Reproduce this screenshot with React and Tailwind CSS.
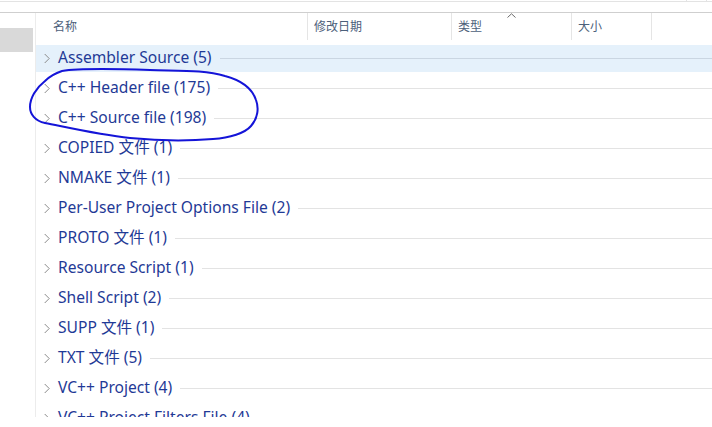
import React from "react";

const rows = [
  "Assembler Source (5)",
  "C++ Header file (175)",
  "C++ Source file (198)",
  "COPIED 文件 (1)",
  "NMAKE 文件 (1)",
  "Per-User Project Options File (2)",
  "PROTO 文件 (1)",
  "Resource Script (1)",
  "Shell Script (2)",
  "SUPP 文件 (1)",
  "TXT 文件 (5)",
  "VC++ Project (4)",
  "VC++ Project Filters File (4)",
];

function Chevron() {
  return (
    <svg width="6" height="11" viewBox="0 0 6 11" className="shrink-0">
      <path d="M0.7 1 L5.2 5.5 L0.7 10" fill="none" stroke="#8a8a8a" strokeWidth="1" />
    </svg>
  );
}

export default function App() {
  const font = { fontFamily: '"Noto Sans", "Noto Sans CJK SC", sans-serif' };
  return (
    <div className="relative w-[712px] h-[427px] bg-white overflow-hidden" style={font}>
      {/* top strip */}
      <div className="h-[2px] shrink-0 border-b border-[#e3e3e3] flex">
        <div className="w-[687px] border-r border-[#e3e3e3]" />
        <div className="w-[20px] border-r border-[#e3e3e3]" />
      </div>
      <div className="h-[10px]" />
      <div className="h-px bg-[#cfcfcf]" />
      <div className="flex h-[404px] overflow-hidden">
        {/* left nav */}
        <div className="w-[36px] shrink-0 border-r border-[#ececec] pt-[15px]">
          <div className="w-[33px] h-[24px] bg-[#d9d9d9]" />
        </div>
        {/* content */}
        <div className="flex-1 flex flex-col overflow-hidden">
          {/* header */}
          <div className="h-[27px] shrink-0 flex text-[12px] text-[#4c607a] relative">
            <div className="w-[272px] h-full border-r border-[#e5e5e5] pl-[17px] flex items-center">名称</div>
            <div className="w-[144px] h-full border-r border-[#e5e5e5] pl-[6px] flex items-center">修改日期</div>
            <div className="w-[120px] h-full border-r border-[#e5e5e5] pl-[6px] flex items-center relative">
              类型
              <svg className="absolute left-[55px] top-0" width="9" height="5" viewBox="0 0 9 5">
                <path d="M0.5 4.5 L4.5 0.8 L8.5 4.5" fill="none" stroke="#6a6a6a" strokeWidth="1" />
              </svg>
            </div>
            <div className="w-[80px] h-full border-r border-[#e5e5e5] pl-[6px] flex items-center">大小</div>
          </div>
          <div className="h-[3px] shrink-0" />
          <div className="flex flex-col shrink-0">
            {rows.map((r, i) => (
              <div key={r} className="h-[30px] flex items-center shrink-0">
                <div
                  className={
                    "w-full h-[27px] flex items-center pl-[8px] " +
                    (i === 0 ? "bg-[#e5f1fb]" : "")
                  }
                >
                  <Chevron />
                  <span className="ml-[8px] text-[15.6px] text-[#1f3a96] whitespace-nowrap leading-none">{r}</span>
                  <div className={"ml-[8px] flex-1 h-px " + (i === 0 ? "bg-[#cad6e2]" : "bg-[#e3e3e3]")} />
                </div>
              </div>
            ))}
          </div>
        </div>
      </div>
      {/* hand drawn annotation */}
      <svg className="absolute left-0 top-0 pointer-events-none" width="712" height="427">
        <path
          d="M62 71 C 80 68, 120 69, 150 70 C 180 71, 205 70, 225 76 C 240 80, 252 88, 256 100 C 259 108, 258 118, 251 126 C 245 133, 230 138, 213 139 C 190 141, 160 141, 130 138 C 100 135, 70 128, 45 123 C 35 121, 30 114, 30 107 C 30 98, 36 88, 45 81 C 50 76, 56 73, 62 71 Z"
          fill="none"
          stroke="#1414d8"
          strokeWidth="2"
          strokeLinecap="round"
        />
      </svg>
    </div>
  );
}
